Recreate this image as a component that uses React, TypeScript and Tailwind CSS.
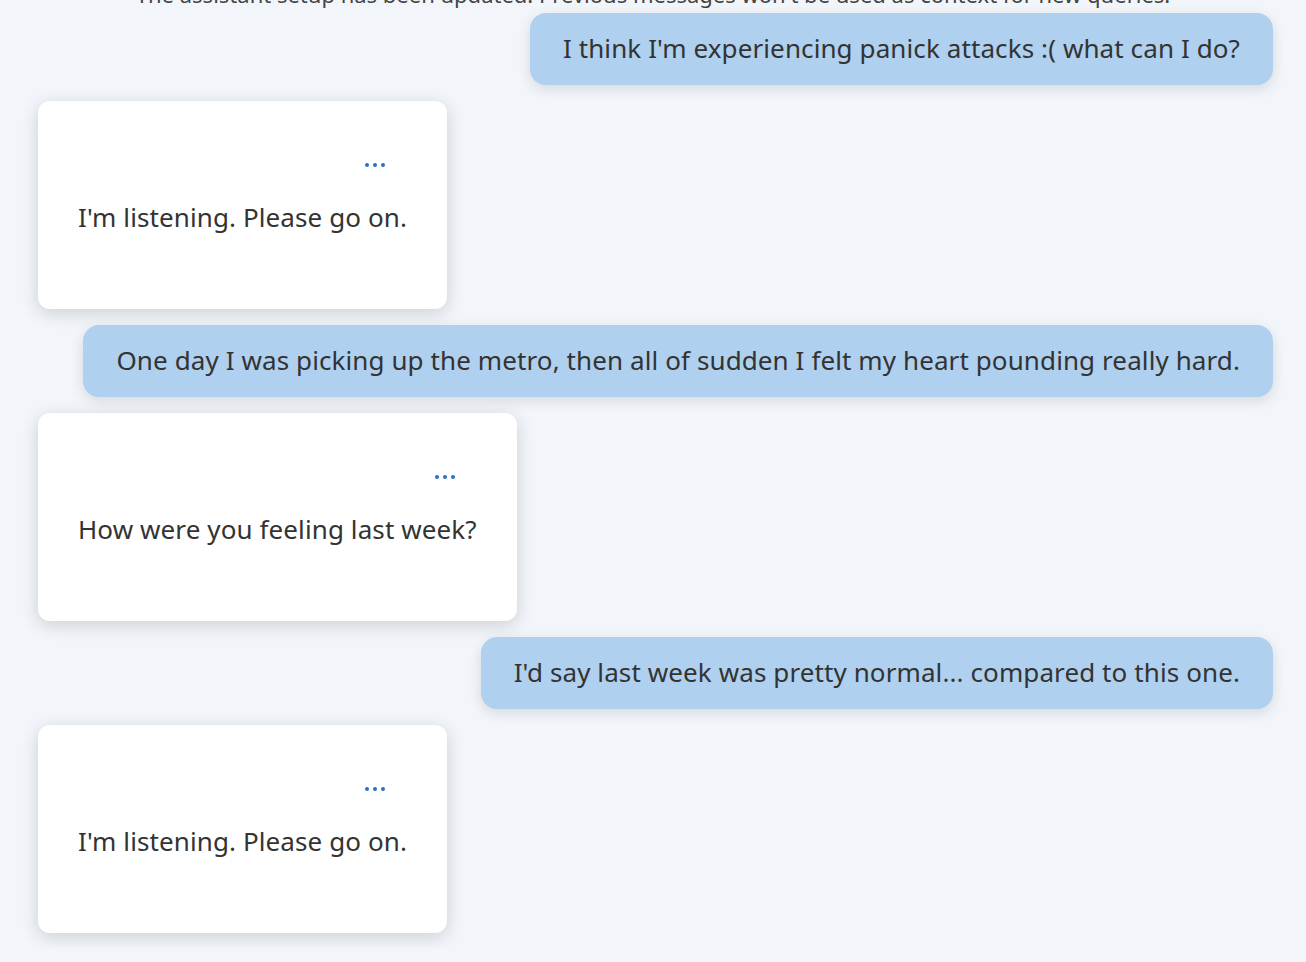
import React from "react";

const Dots = () => (
  <div className="flex h-[8px] items-center justify-end gap-[4px] pr-[22px]">
    <span className="block h-[4px] w-[4px] rounded-full bg-[#2f6fc4]" />
    <span className="block h-[4px] w-[4px] rounded-full bg-[#2f6fc4]" />
    <span className="block h-[4px] w-[4px] rounded-full bg-[#2f6fc4]" />
  </div>
);

const User = ({ text }: { text: string }) => (
  <div className="self-end rounded-[16px] bg-[#afd0ee] px-[33px] pt-[17px] pb-[19px] text-[26px] leading-[36px] tracking-[0.1px] text-[#333333] shadow-[0_4px_14px_rgba(0,0,0,0.12)]">
    {text}
  </div>
);

const Bot = ({ text }: { text: string }) => (
  <div className="self-start rounded-[12px] bg-white px-[40px] pt-[60px] pb-[74px] text-[26px] leading-[36px] tracking-[0.1px] text-[#333333] shadow-[0_4px_18px_rgba(0,0,0,0.16)]">
    <Dots />
    <div className="mt-[30px] whitespace-nowrap">{text}</div>
  </div>
);

export default function App() {
  return (
    <div
      className="h-[962px] w-[1306px] overflow-hidden bg-[#f2f6fa]"
      style={{ fontFamily: '"Noto Sans", "Open Sans", sans-serif' }}
    >
      <div className="h-[948px] overflow-hidden">
        <p className="mt-[-21px] text-center text-[22px] leading-[30px] text-[#444]">
          The assistant setup has been updated. Previous messages won't be used as context for new queries.
        </p>
        <div className="mt-[4px] flex flex-col gap-[16px] pl-[38px] pr-[33px]">
          <User text="I think I'm experiencing panick attacks :( what can I do?" />
          <Bot text="I'm listening. Please go on." />
          <User text="One day I was picking up the metro, then all of sudden I felt my heart pounding really hard." />
          <Bot text="How were you feeling last week?" />
          <User text="I'd say last week was pretty normal... compared to this one." />
          <Bot text="I'm listening. Please go on." />
        </div>
      </div>
    </div>
  );
}
